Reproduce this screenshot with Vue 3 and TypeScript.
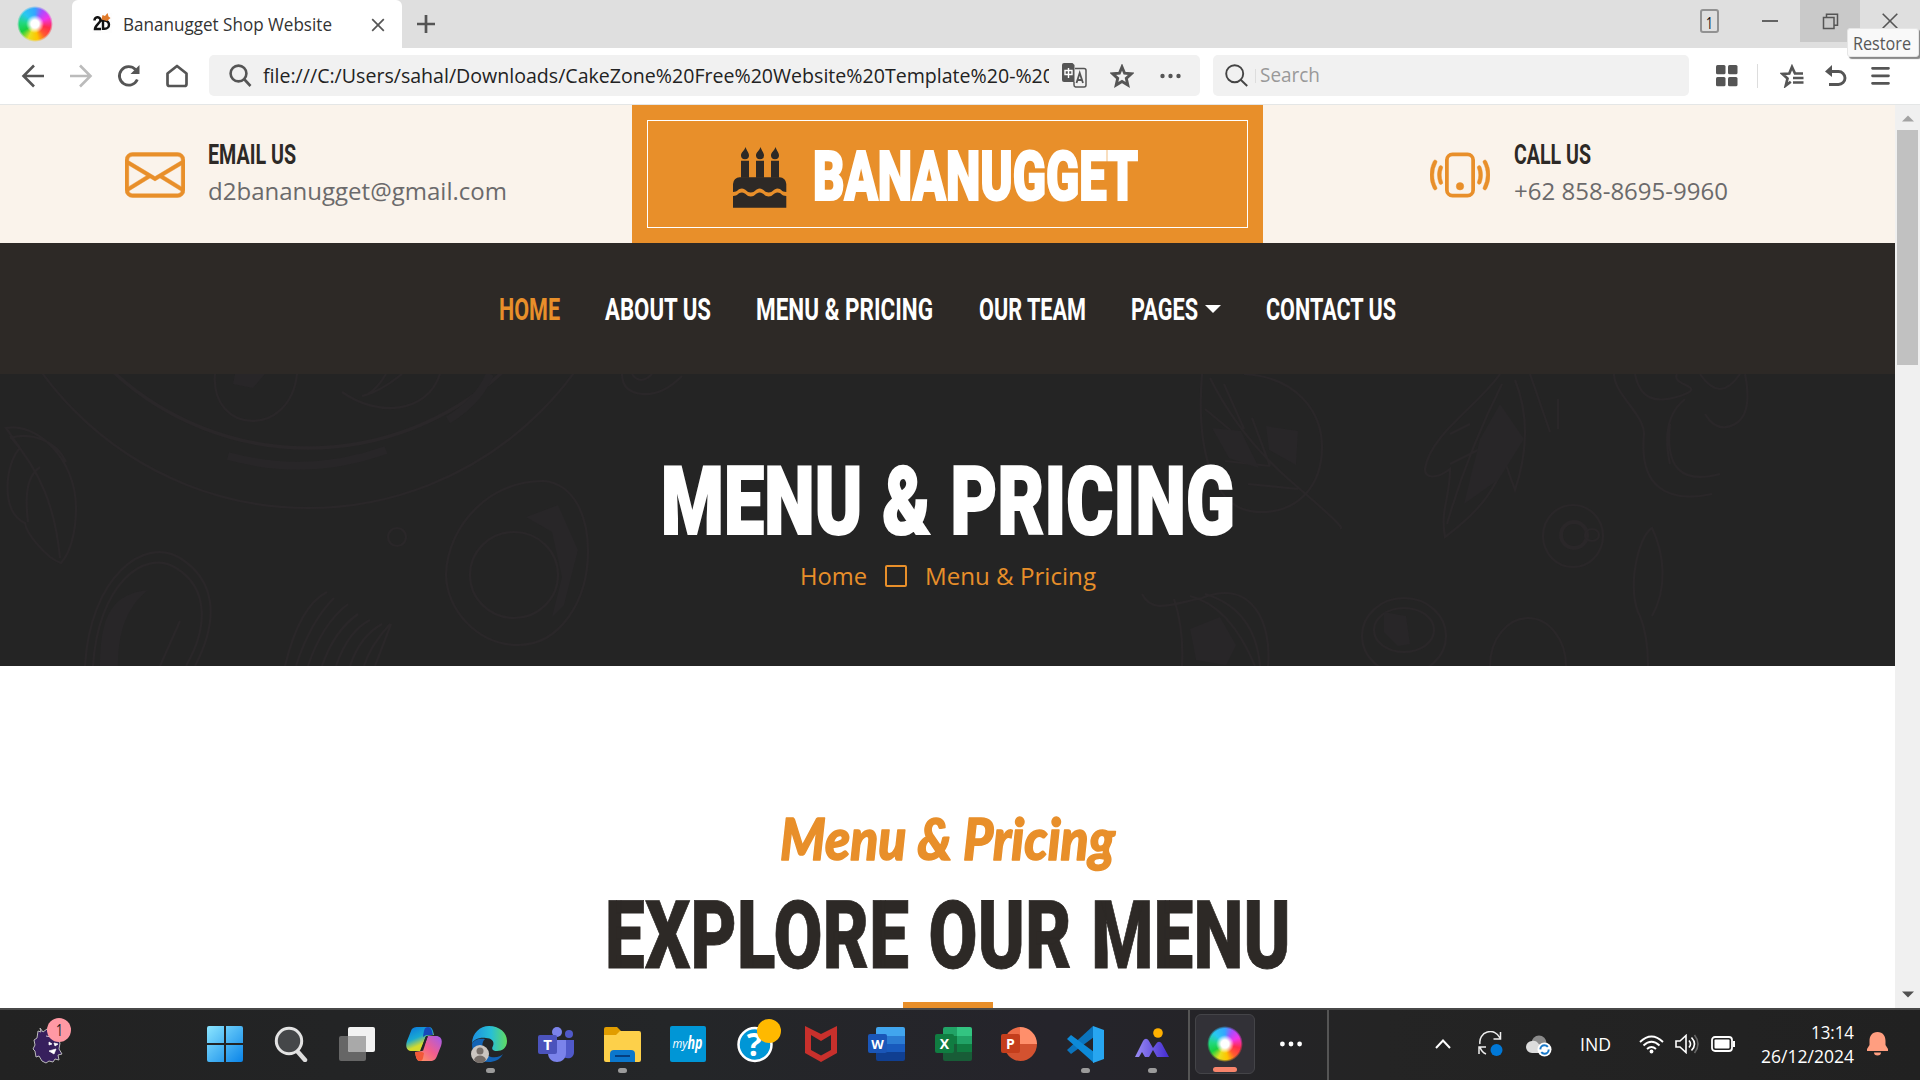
<script setup lang="ts">
import { h, type FunctionalComponent } from 'vue'

interface FitProps {
  t: string
  w: number
  cap: number
  x?: number
}

// Single-line label whose box is exactly its cap height tall and `w` pixels wide.
const Fit: FunctionalComponent<FitProps> = (props) =>
  h('svg', { width: props.w, height: props.cap, class: 'fit' }, [
    h(
      'text',
      {
        x: props.x ?? 0,
        y: props.cap,
        'font-size': props.cap / 0.713,
        textLength: props.w - 2 * (props.x ?? 0),
        lengthAdjust: 'spacingAndGlyphs',
      },
      props.t,
    ),
  ])
Fit.props = ['t', 'w', 'cap', 'x']

interface NavItem {
  label: string
  width: number
  active?: boolean
  caret?: boolean
}

const nav: NavItem[] = [
  { label: 'HOME', width: 61, active: true },
  { label: 'ABOUT US', width: 106 },
  { label: 'MENU & PRICING', width: 177 },
  { label: 'OUR TEAM', width: 107 },
  { label: 'PAGES', width: 67, caret: true },
  { label: 'CONTACT US', width: 130 },
]

const url = 'file:///C:/Users/sahal/Downloads/CakeZone%20Free%20Website%20Template%20-%20'
</script>

<template>
  <div class="screen">
    <div class="tabbar">
      <div class="logo-cell"><i class="swirl"></i></div>
      <div class="tab">
        <svg class="favicon" width="20" height="20" viewBox="0 0 20 20">
          <rect width="20" height="20" fill="#fdfdfd" />
          <path d="M2.500 7.500a3 3 0 0 1 6-.5c0 3-5.500 5-5.500 9h6" fill="none" stroke="#111" stroke-width="2.500" />
          <path d="M11 7.500v8.300h1.500c6 0 6-8.300 0-8.300H8.500" fill="none" stroke="#111" stroke-width="2.400" />
          <path d="M9.500 6.500l1-4.500 2.500 1L15.500 0l1 3.500 2 1.500L15 8z" fill="#e07a2a" />
        </svg>
        <Fit class="ui tab-title" t="Bananugget Shop Website" :w="209" :cap="12.5" :x="0" />
        <svg class="tab-close" width="14" height="14" viewBox="0 0 14 14"><path d="M1.200 1.200l11.600 11.600M12.800 1.200L1.200 12.800" stroke="#555" stroke-width="1.700" /></svg>
      </div>
      <svg class="plus" width="20" height="20" viewBox="0 0 20 20"><path d="M10 1v18M1 10h18" stroke="#555" stroke-width="2.700" /></svg>
      <div class="window-buttons">
        <div class="tab-count"><Fit class="ui" t="1" :w="7" :cap="12" /></div>
        <div class="wbtn"><svg width="16" height="16"><path d="M0 8h16" stroke="#555" stroke-width="1.800" /></svg></div>
        <div class="wbtn hovered">
          <svg width="17" height="17" viewBox="0 0 17 17" fill="none" stroke="#555" stroke-width="1.500"><path d="M1.500 4.500h10.500v11H1.500zM4.500 4V1.300h11v11H12.500" /></svg>
        </div>
        <div class="wbtn"><svg width="16" height="16" viewBox="0 0 16 16"><path d="M.7.7l14.600 14.600M15.300.7L.7 15.300" stroke="#555" stroke-width="1.600" /></svg></div>
      </div>
      <div class="tooltip"><Fit class="ui" t="Restore" :w="58" :cap="12.7" /></div>
    </div>

    <div class="toolbar">
      <svg class="tb-back" width="24" height="24" viewBox="0 0 24 24" fill="none" stroke="#555" stroke-width="2.600"><path d="M23 12H3M13 1.500L2.500 12 13 22.500" /></svg>
      <svg class="tb-fwd" width="24" height="24" viewBox="0 0 24 24" fill="none" stroke="#bbb" stroke-width="2.600"><path d="M1 12h20M11 1.500L21.500 12 11 22.500" /></svg>
      <svg class="tb-reload" width="24" height="24" viewBox="0 0 24 24"><path d="M20.300 15.500A9.300 9.300 0 1 1 18.500 5.500" fill="none" stroke="#555" stroke-width="2.800" /><path d="M22.500 1v9h-9z" fill="#555" /></svg>
      <svg class="tb-home" width="24" height="24" viewBox="0 0 24 24" fill="none" stroke="#555" stroke-width="2.700" stroke-linejoin="round"><path d="M2.500 9.500L12 2l9.500 7.500V20a2 2 0 0 1-2 2h-15a2 2 0 0 1-2-2z" /></svg>
      <div class="address">
        <svg class="mag" width="23" height="23" viewBox="0 0 23 23" fill="none" stroke="#555" stroke-width="2.600"><circle cx="9.500" cy="9.500" r="7.900" /><path d="M15 15l6.500 7" /></svg>
        <div class="url"><Fit class="ui" :t="url" :w="791" :cap="14.3" /></div>
        <svg class="translate" width="25" height="25" viewBox="0 0 25 25">
          <path d="M2 0h8.500l2 2v17H2a2 2 0 0 1-2-2V2a2 2 0 0 1 2-2z" fill="#555" />
          <path d="M13 5.500h9a2 2 0 0 1 2 2v14.500a2 2 0 0 1-2 2h-8.500a2 2 0 0 1-1.500-2v-3" fill="none" stroke="#555" stroke-width="1.500" />
          <path d="M3 7.500h7v4H3zM6.500 5v10" fill="none" stroke="#fff" stroke-width="1.400" />
          <path d="M14.500 20l3.200-10 3.300 10M15.700 17h4" fill="none" stroke="#555" stroke-width="1.800" />
        </svg>
        <svg class="star" width="24" height="24" viewBox="0 0 24 24"><path d="M12 3l2.600 6.200 6.700.6-5 4.500 1.500 6.700-5.800-3.500L6.200 21l1.500-6.700-5-4.500 6.700-.6z" fill="none" stroke="#555" stroke-width="2.900" /></svg>
        <svg class="more" width="21" height="6"><circle v-for="i in 3" :key="i" :cx="i * 8 - 5.500" cy="3" r="2.200" fill="#555" /></svg>
      </div>
      <div class="search">
        <svg class="mag" width="23" height="23" viewBox="0 0 23 23" fill="none" stroke="#444" stroke-width="1.900"><circle cx="9.700" cy="9.700" r="8.500" /><path d="M15.700 15.700l6.500 6.300" /></svg>
        <i class="caret-line"></i>
        <Fit class="ui placeholder" t="Search" :w="60" :cap="14.3" />
      </div>
      <svg class="grid" width="22" height="22" fill="#555"><rect width="9.500" height="9.300" rx="1.500" /><rect x="12" width="9.500" height="9.300" rx="1.500" /><rect y="12" width="9.500" height="9.300" rx="1.500" /><rect x="12" y="12" width="9.500" height="9.300" rx="1.500" /></svg>
      <i class="sep"></i>
      <svg class="fav" width="24" height="24" viewBox="0 0 24 24"><path d="M23 9.500h-8L12 3 9.300 9.500 2.500 10l5 4.500L5.800 21.500l5-3.800" fill="none" stroke="#555" stroke-width="2.700" /><path d="M13 14h10.500M13 18.500h10.500" stroke="#555" stroke-width="2.500" /></svg>
      <svg class="undo" width="22" height="22" viewBox="0 0 22 22"><path d="M4 6.500h9.500a6.500 6.500 0 0 1 0 13H4" fill="none" stroke="#555" stroke-width="2.900" /><path d="M0 6.500L7 0v12z" fill="#555" /></svg>
      <svg class="burger" width="19" height="20"><path d="M1.500 2.300h16M1.500 9.800h16M1.500 17.300h16" stroke="#555" stroke-width="2.700" stroke-linecap="round" /></svg>
    </div>

    <div class="viewport">
      <main class="page">
        <header class="top">
          <div class="contact email">
            <svg width="60" height="60" viewBox="0 0 16 16" fill="#e88f2a"><path d="M0 4a2 2 0 0 1 2-2h12a2 2 0 0 1 2 2v8a2 2 0 0 1-2 2H2a2 2 0 0 1-2-2V4Zm2-1a1 1 0 0 0-1 1v.217l7 4.200 7-4.200V4a1 1 0 0 0-1-1H2Zm13 2.383-4.708 2.825L15 11.105V5.383Zm-.034 6.876-5.640-3.471L8 9.583l-1.326-.795-5.640 3.470A1 1 0 0 0 2 13h12a1 1 0 0 0 .966-.741ZM1 11.105l4.708-2.897L1 5.383v5.722Z" stroke="#e88f2a" stroke-width=".12" /></svg>
            <div class="lines">
              <Fit class="osw medium" t="EMAIL US" :w="88" :cap="19.300" />
              <Fit class="sans" t="d2bananugget@gmail.com" :w="299" :cap="17.200" />
            </div>
          </div>
          <div class="brand">
            <div class="frame">
              <svg width="54" height="62" viewBox="0 0 54 62" fill="#2d2926">
                <path d="M12.500 0c-1 4-4.500 5-4.500 8.500a4 3.700 0 0 0 8 0c0-3-2-4-3.500-8.500zM27.500 0c-1 4-4.500 5-4.500 8.500a4 3.700 0 0 0 8 0c0-3-2-4-3.500-8.500zM42.500 0c-1 4-4.500 5-4.500 8.500a4 3.700 0 0 0 8 0c0-3-2-4-3.500-8.500z" />
                <path d="M8 13.700h8v17H8zM23 13.700h8v17h-8zM38 13.700h8v17h-8z" />
                <path d="M0 37a6.700 6.700 0 0 1 6.700-6.700h39.900A6.700 6.700 0 0 1 53.300 37v8c-5 0-5-3.500-8.800-3.500s-4.500 4-8.900 4-4.900-4-8.900-4-4.500 4-8.900 4-4.900-4-8.900-4S5 45 0 45z" />
                <path d="M0 49c5 0 5-3.500 8.900-3.500s4.500 4 8.900 4 4.900-4 8.900-4 4.500 4 8.900 4 4.900-4 8.900-4 3.800 3.500 8.800 3.500v11.800H0z" />
              </svg>
              <Fit class="osw black" t="BANANUGGET" :w="323" :cap="49" :x="-1" />
            </div>
          </div>
          <div class="contact call">
            <svg width="60" height="60" viewBox="0 0 16 16" fill="#e88f2a"><path d="M10 3a1 1 0 0 1 1 1v8a1 1 0 0 1-1 1H6a1 1 0 0 1-1-1V4a1 1 0 0 1 1-1h4zM6 2a2 2 0 0 0-2 2v8a2 2 0 0 0 2 2h4a2 2 0 0 0 2-2V4a2 2 0 0 0-2-2H6z" /><path d="M8 12a1 1 0 1 0 0-2 1 1 0 0 0 0 2zM1.599 4.058a.5.5 0 0 1 .208.676A6.967 6.967 0 0 0 1 8c0 1.180.292 2.292.807 3.266a.5.5 0 0 1-.884.468A7.968 7.968 0 0 1 0 8c0-1.347.334-2.619.923-3.734a.5.5 0 0 1 .676-.208zm12.802 0a.5.5 0 0 1 .676.208A7.967 7.967 0 0 1 16 8a7.967 7.967 0 0 1-.923 3.734.5.5 0 0 1-.884-.468A6.967 6.967 0 0 0 15 8c0-1.180-.292-2.292-.807-3.266a.5.5 0 0 1 .208-.676zM3.057 5.534a.5.5 0 0 1 .284.648A4.986 4.986 0 0 0 3 8c0 .642.120 1.255.340 1.818a.5.5 0 1 1-.930.364A5.986 5.986 0 0 1 2 8c0-.769.145-1.505.410-2.182a.5.5 0 0 1 .647-.284zm9.886 0a.5.5 0 0 1 .648.284C13.855 6.495 14 7.231 14 8c0 .769-.145 1.505-.410 2.182a.5.5 0 0 1-.930-.364C12.880 9.255 13 8.642 13 8c0-.642-.120-1.255-.340-1.818a.5.5 0 0 1 .283-.648z" stroke="#e88f2a" stroke-width=".12" /></svg>
            <div class="lines">
              <Fit class="osw medium" t="CALL US" :w="77" :cap="19.300" />
              <Fit class="sans" t="+62 858-8695-9960" :w="214" :cap="17.200" />
            </div>
          </div>
        </header>

        <nav class="nav">
          <a v-for="n in nav" :key="n.label" :class="{ active: n.active }">
            <Fit class="osw medium" :t="n.label" :w="n.width" :cap="21.700" />
            <svg v-if="n.caret" class="drop" width="16" height="8"><path d="M0 0h16L8 8z" fill="#fff" /></svg>
          </a>
        </nav>

        <section class="hero">
          <svg class="doodles" width="1895" height="292" fill="none" stroke="#2a2729" stroke-width="2.200">
            <circle cx="308" cy="-195" r="329" />
            <circle cx="308" cy="-213" r="287" stroke-width="3.500" />
            <path d="M228 82q80 22 158-6M490 0q-12 28-42 46" stroke="#282628" stroke-width="8" />
            <path d="M215 0c-5 60 75 65 82 0M342 18c35 25 85 22 98-18M362 22q18-4 40-22M386 0q-8 14-18 20" />
            <path d="M235 0h30l-12 14-20-4z" fill="#282628" stroke="none" />
            <path d="M6 54c30-6 70 30 70 80 0 25-6 45-15 55-15-5-35-30-36-40-25-10-20-60-5-75zM10 62c30 35 45 70 50 122M28 148c-5-40 5-50 12-55M66 88c-10-22-35-30-56-24" />
            <path d="M85 292c5-90 60-130 95-108s40 60 15 108M93 292c5-80 50-118 83-98s32 60 10 98M160 292l20-45" />
            <path d="M100 292c0-50 12-72 48-76-20 16-30 40-30 76z" fill="#282628" stroke="none" />
            <path d="M446 200c2-50 45-94 98-93 30 3 44 35 44 70 0 50-28 94-70 94-40 0-72-35-72-71z" />
            <ellipse cx="514" cy="201" rx="44" ry="43" /><ellipse cx="397" cy="163" rx="9" ry="9" />
            <path d="M526 143l32-12 20 45-14 55-12 12 10-40-10-45z" fill="#282628" stroke="none" />
            <path d="M285 292c6-25 18-62 42-74M296 292q14-44 38-68M308 292q14-42 40-62M322 292q12-35 36-52M336 292q12-35 34-46M350 292q10-30 32-42M364 292q6-20 26-42M375 292l16-42" />
            <path d="M622 0q0 18 20 20t40-18M632 0q8 12 20 0" />
            <path d="M1202 0c-6 75 10 140 60 138 35 0 60-25 60-65 0-35-25-70-78-73M1210 4q30 60 84 106t46 44M1235 60l-30-25M1270 92l-45-5M1270 92l-18-48M1298 115l-50-5M1244 55l-20-45" />
            <path d="M1212 54l29 3 18 37-30-10zM1266 52l32 5-2 34-27-15z" fill="#282628" stroke="none" />
            <path d="M1500 0c-20 30-70 60-75 95 0 10 12 10 25 0 0 30-10 40-5 68 40-30 50-50 60-75l10 28q20-60 0-110M1502 10q-35 70-55 140M1470 50l-20 10M1480 75l-30 15M1530 0l20 58M1558 25v30" />
            <path d="M1480 65l20-35 24 35-25 40-35 25z" fill="#282628" stroke="none" />
            <path d="M1614 0c0 20 30 40 30 60-5 50 20 70 68 60M1635 0c5 25 20 30 45 22 30-10-10-10-3-22M1670 50c-5 45 12 60 50 50M1685 25q-25 20-15 65M1700 0q20 30 40 0M1745 0q8 40-10 50t-30-10" />
            <ellipse cx="1573" cy="162" rx="30" ry="31" /><ellipse cx="1574" cy="161" rx="13" ry="13" stroke-width="4" /><ellipse cx="1592" cy="161" rx="7" ry="6" />
            <path d="M1648 292q0-30-8-50c-14-25-2-80 12-88 12 25 16 60 0 88" />
            <path d="M1142 220c10 20 30 10 60 4 50-20 70 25 66 68M1174 225q10 30 8 67M1205 220q50 15 55 72M1190 222q40 10 65 70" />
            <path d="M1190 255l30-12 16 28-10 20-30-5z" fill="#282628" stroke="none" />
            <ellipse cx="1404" cy="262" rx="42" ry="38" /><ellipse cx="1404" cy="256" rx="30" ry="22" />
            <path d="M1384 238l22 4 4 28-12 2-14-14z" fill="#282628" stroke="none" />
            <ellipse cx="1528" cy="292" rx="38" ry="48" />
          </svg>
          <Fit class="osw black spaced hero-title" t="MENU & PRICING" :w="570" :cap="68" :x="-2" />
          <div class="crumbs">
            <Fit class="sans" t="Home" :w="67" :cap="17" />
            <i class="square"></i>
            <Fit class="sans" t="Menu & Pricing" :w="171" :cap="17" />
          </div>
        </section>

        <section class="menu">
          <Fit class="script" t="Menu & Pricing" :w="335" :cap="41" />
          <Fit class="osw bold spaced explore" t="EXPLORE OUR MENU" :w="680" :cap="68" :x="-3" />
          <div class="rule"></div>
        </section>
      </main>
      <aside class="scroll">
        <svg width="12" height="7"><path d="M0 6.500h12L6 .5z" fill="#a3a3a3" /></svg>
        <i class="thumb"></i>
        <svg class="down" width="12" height="7"><path d="M0 .5h12L6 6.500z" fill="#505050" /></svg>
      </aside>
    </div>

    <footer class="taskbar">
      <div class="widget">
        <svg width="32" height="37" viewBox="0 0 32 37"><path d="M8 1l3 4 4-3 2 5 6 1 5 8-1 6 3 5-4 1 1 5-4-1-2 3-4-1-3 2-4-2-3-5-3 1-1-6-2-2 2-4-1-5 3-2 1-7 3 1z" fill="#37205d" stroke="#bbb" stroke-width="1" /><path d="M17 15l3 2-3 1zM22 16l4 1-3 2zM17 24l7-2-2 5zM14 9l5 1" fill="#fff" stroke="#fff" stroke-width=".7" /></svg>
        <span class="badge"><Fit class="ui" t="1" :w="7" :cap="12" /></span>
      </div>
      <div class="apps">
        <div class="app"><svg width="36" height="36" viewBox="0 0 36 36"><defs><linearGradient id="gw" x2="1" y2="1" gradientUnits="objectBoundingBox"><stop stop-color="#8ce6ff" /><stop offset="1" stop-color="#0a84e8" /></linearGradient></defs><path d="M2 0h15v17H0V2a2 2 0 0 1 2-2zM19 0h15a2 2 0 0 1 2 2v15H19zM0 19h17v17H2a2 2 0 0 1-2-2zM19 19h17v15a2 2 0 0 1-2 2H19z" fill="url(#gw)" /></svg></div>
        <div class="app"><svg width="36" height="36" viewBox="0 0 36 36"><path d="M25 26l7 8" stroke="#ddd" stroke-width="4.500" stroke-linecap="round" /><circle cx="16" cy="15" r="12.700" fill="#454749" stroke="#e3e3e3" stroke-width="3" /></svg></div>
        <div class="app"><svg width="36" height="36" viewBox="0 0 36 36"><rect y="10" width="27" height="25" rx="2" fill="#666" /><rect x="9" y="1" width="27" height="25" rx="2" fill="#f2f2f2" /><path d="M9 10h18v16H11a2 2 0 0 1-2-2z" fill="#a9a9a9" /></svg></div>
        <div class="app"><svg width="36" height="36" viewBox="0 0 36 36"><defs><linearGradient id="ga" x2=".5" y2="1"><stop stop-color="#0a73df" /><stop offset=".5" stop-color="#19a9d2" /><stop offset=".8" stop-color="#d4db2d" /></linearGradient><linearGradient id="gb" x1="1" x2="0" y2="1"><stop stop-color="#a05bf0" /><stop offset=".5" stop-color="#f25e8d" /><stop offset="1" stop-color="#ffa15d" /></linearGradient></defs><path d="M12 1h11c3 0 4 3 5 8l-8 1-6 15H6c-5 0-7-4-5-10l4-10c1-3 3-4 7-4z" fill="url(#ga)" /><path d="M22 1c3 0 4 3 5 8h-7l-3 2c1-6 1-10 5-10z" fill="#1648ba" /><path d="M24 35H14c-3 0-4-3-5-9l7-1 6-15h8c5 0 7 4 5 10l-4 10c-1 3-3 5-7 5z" fill="url(#gb)" /><path d="M14 35c-3 0-4-3-5-9h7l2 1c-1 5-1 8-4 8z" fill="#f25838" /><path d="M15 24l4.500-13h2L17 25z" fill="#242528" /></svg></div>
        <div class="app"><svg width="37" height="37" viewBox="0 0 37 37"><defs><linearGradient id="ge" x2="1"><stop stop-color="#1b8fe0" /><stop offset=".55" stop-color="#28bfd5" /><stop offset="1" stop-color="#61db61" /></linearGradient></defs><path d="M1 18C1 7 9 0 18 0c11 0 18 7 18 15 0 7-5 10-10 10-4 0-6-2-4-5 2-5-2-8-7-8C8 11 2 14 1 18z" fill="url(#ge)" /><path d="M1 18c2-5 8-6 13-5-5 4-3 16 6 18 6 1 10-1 12-3-3 6-9 8-14 8C8 36 1 29 1 18z" fill="#1263b5" /><circle cx="9" cy="28" r="9" fill="#cbc5c0" /><circle cx="9" cy="25" r="3.500" fill="#766e69" /><path d="M3 34c1-6 11-6 12 0-3 4-9 4-12 0z" fill="#766e69" /></svg><i class="dot"></i></div>
        <div class="app"><svg width="37" height="37" viewBox="0 0 37 37"><circle cx="19" cy="6" r="5" fill="#7b83eb" /><circle cx="31" cy="8" r="4" fill="#5059c9" /><path d="M23 14h13v12c0 8-10 8-13 2z" fill="#5059c9" /><path d="M10 14h18v13c0 12-18 12-18 0z" fill="#7b83eb" /><rect y="9" width="19" height="19" rx="2" fill="#4b53bc" /><text x="9.500" y="24" font-size="15" font-weight="700" fill="#fff" text-anchor="middle">T</text></svg></div>
        <div class="app"><svg width="37" height="36" viewBox="0 0 37 36"><path d="M2 1h11l4 4v6H0V3a2 2 0 0 1 2-2z" fill="#e19d00" /><path d="M0 9h12l4-4h19a2 2 0 0 1 2 2v27a2 2 0 0 1-2 2H2a2 2 0 0 1-2-2z" fill="#fdd04a" /><path d="M6 36V28a4 4 0 0 1 4-4h17a4 4 0 0 1 4 4v8z" fill="#0b77cc" /><path d="M11 30h15" stroke="#053f80" stroke-width="2" /></svg><i class="dot"></i></div>
        <div class="app"><svg width="36" height="36" viewBox="0 0 36 36"><rect width="36" height="36" rx="2" fill="#0096d6" /><text x="2.500" y="22" font-size="13" font-style="italic" fill="#fff" textLength="15" lengthAdjust="spacingAndGlyphs">my</text><text x="17.500" y="23" font-size="18" font-style="italic" font-weight="700" fill="#fff" textLength="15" lengthAdjust="spacingAndGlyphs">hp</text></svg></div>
        <div class="app"><svg class="over" width="36" height="36" viewBox="0 0 36 36"><circle cx="18" cy="18.500" r="16.500" fill="#0096d6" stroke="#fff" stroke-width="2.500" /><text x="17.500" y="30" font-size="32" font-weight="700" fill="#fff" text-anchor="middle">?</text><circle cx="32" cy="5" r="12" fill="#ffb900" /></svg></div>
        <div class="app"><svg width="34" height="36" viewBox="0 0 34 36"><path d="M1 0l16 8 16-8v27l-16 9L1 27zM7 9v15l10 5.500L27 24V9l-10 6z" fill="#c8302c" fill-rule="evenodd" /></svg></div>
        <div class="app"><svg width="37" height="34" viewBox="0 0 37 34"><path d="M10 0h25a2 2 0 0 1 2 2v7H8V2a2 2 0 0 1 2-2z" fill="#41a5ee" /><path d="M8 9h29v8H8z" fill="#2b7cd3" /><path d="M8 17h29v8H8z" fill="#185abd" /><path d="M8 25h29v7a2 2 0 0 1-2 2H10a2 2 0 0 1-2-2z" fill="#103f91" /><rect y="7" width="19" height="19" rx="2" fill="#1a56b8" /><text x="9.500" y="21.500" font-size="13" font-weight="700" fill="#fff" text-anchor="middle">W</text></svg></div>
        <div class="app"><svg width="37" height="34" viewBox="0 0 37 34"><path d="M10 0h12v9H8V2a2 2 0 0 1 2-2z" fill="#21a366" /><path d="M22 0h13a2 2 0 0 1 2 2v7H22z" fill="#33c481" /><path d="M8 9h14v8H8z" fill="#107c41" /><path d="M22 9h15v8H22z" fill="#21a366" /><path d="M8 17h14v8H8z" fill="#185c37" /><path d="M22 17h15v8H22z" fill="#107c41" /><path d="M8 25h29v7a2 2 0 0 1-2 2H10a2 2 0 0 1-2-2z" fill="#185c37" /><rect y="7" width="19" height="19" rx="2" fill="#107c41" /><text x="9.500" y="22" font-size="14" font-weight="700" fill="#fff" text-anchor="middle">X</text></svg></div>
        <div class="app"><svg width="36" height="34" viewBox="0 0 36 34"><path d="M19 0v17H3A17 17 0 0 1 19 0z" fill="#ed6c47" /><path d="M19 0a17 17 0 0 1 17 17H19z" fill="#ff8f6b" /><path d="M3 17h33a16.500 17 0 0 1-33 0z" fill="#d35230" /><rect y="7" width="19" height="19" rx="2" fill="#c43e1c" /><text x="9.500" y="22" font-size="14" font-weight="700" fill="#fff" text-anchor="middle">P</text></svg></div>
        <div class="app"><svg width="37" height="37" viewBox="0 0 37 37"><path d="M26 0L0 24l4 4 23-17z" fill="#0b74bd" /><path d="M0 13l4-4 23 17v11z" fill="#0d8ad8" /><path d="M26 0l11 4v29l-11 4z" fill="#27a6f1" /></svg><i class="dot"></i></div>
        <div class="app"><svg width="36" height="36" viewBox="0 0 36 36"><defs><linearGradient id="gm" x2="1"><stop stop-color="#9a8cf5" /><stop offset="1" stop-color="#432bd0" /></linearGradient></defs><circle cx="24" cy="7" r="4.800" fill="#ffb000" /><path d="M1 31l8-16c2-3 4-3 6 0l4 7 3-4c2-3 4-3 6 0l7 13H23l-4-7-4 7h-4l-3-5-3 5z" fill="url(#gm)" /></svg><i class="dot"></i></div>
      </div>
      <div class="current"><div class="tile"><i class="swirl"></i><i class="bar"></i></div><svg width="24" height="6"><circle v-for="i in 3" :key="i" :cx="i * 8.600 - 5.200" cy="3" r="2.400" fill="#fff" /></svg></div>
      <div class="tray">
        <svg class="chev" width="16" height="10" viewBox="0 0 16 10"><path d="M1 9l7-7.500L15 9" fill="none" stroke="#fff" stroke-width="2" /></svg>
        <svg class="sync" width="26" height="26" viewBox="0 0 26 26" fill="none" stroke="#eee" stroke-width="1.500"><path d="M2 13A10.500 10.500 0 0 1 22 7M22.500 1v7h-7M8 23a11 11 0 0 1-6-7M1 23v-7h7" /><circle cx="18.500" cy="19" r="6" fill="#0078d7" stroke="none" /></svg>
        <svg class="cloud" width="26" height="22" viewBox="0 0 26 22"><circle cx="13" cy="8" r="7.500" fill="#8b8b8b" /><path d="M6 18a6 6 0 0 1 0-12c5-1 6 3 8 4v8z" fill="#dcdcdc" /><circle cx="18.500" cy="14.500" r="7" fill="#fff" /><circle cx="18.500" cy="14.500" r="4.200" fill="none" stroke="#1878c8" stroke-width="2" stroke-dasharray="10 3" /></svg>
        <Fit class="ui ind" t="IND" :w="31" :cap="13" />
        <svg class="wifi" width="25" height="19" viewBox="0 0 25 19" fill="none" stroke="#fff" stroke-width="1.900"><path d="M1 7Q12.500-4 24 7M4.500 10.500q8-7.500 16 0M8 14q4.500-4 9 0" /><circle cx="12.500" cy="16.500" r="1.900" fill="#fff" stroke="none" /></svg>
        <svg class="speaker" width="25" height="20" viewBox="0 0 25 20" fill="none" stroke="#fff" stroke-width="1.600"><path d="M1 7h4l6-5.500v17L5 13H1zM14 6.500q3 3.500 0 7M16.500 3.500q6 6.500 0 13" /><path d="M19.500 1q7 9 0 18" stroke="#666" /></svg>
        <svg class="battery" width="26" height="17" viewBox="0 0 26 17"><rect x="1" y="1" width="20" height="14" rx="3" fill="none" stroke="#fff" stroke-width="1.800" /><rect x="3.500" y="3.500" width="15" height="9" rx="1" fill="#fff" /><path d="M22 5h2v6h-2" fill="#fff" /></svg>
        <div class="clock"><Fit class="ui" t="13:14" :w="43" :cap="12.800" /><Fit class="ui" t="26/12/2024" :w="93" :cap="12.800" /></div>
        <svg class="bell" width="21" height="24" viewBox="0 0 21 24" fill="#ff9e80"><path d="M10.500 0C5 0 2.500 4 2.500 9v4L0 17v2h21v-2l-2.500-4V9c0-5-2.500-9-8-9zM7 20.500h7a3.500 3 0 0 1-7 0z" /></svg>
      </div>
    </footer>
  </div>
</template>

<style>
body { overflow: hidden; }
</style>

<style scoped>
.screen { width: 1920px; height: 1080px; display: flex; flex-direction: column; background: #fff; font-family: "Open Sans", "Noto Sans", sans-serif; overflow: hidden; }
svg { display: block; flex: none; }
.fit { overflow: visible; fill: currentColor; }
.ui { font-family: "Open Sans", sans-serif; }
.sans { font-family: "Open Sans", sans-serif; }
.osw { font-family: Roboto, "Liberation Sans Narrow", sans-serif; }
.medium { font-weight: 700; }
.bold { font-weight: 900; stroke: currentColor; stroke-width: .8px; }
.black { font-weight: 900; stroke: currentColor; stroke-width: 2.200px; }
.spaced { word-spacing: .13em; letter-spacing: .02em; }
.script { font-family: Lato, sans-serif; font-style: italic; font-weight: 900; color: #e88f2a; stroke: currentColor; stroke-width: 1.500px; stroke-linejoin: round; }

.tabbar { height: 48px; flex: none; display: flex; background: #dfdfdf; position: relative; }
.logo-cell { width: 72px; display: flex; justify-content: center; padding: 6px 2px 0 0; box-sizing: border-box; }
.swirl { display: block; width: 36px; height: 36px; border-radius: 50%; background: radial-gradient(circle, #fff 4px, transparent 9px), conic-gradient(#35a5ff, #a84dff 30deg, #f235e8 65deg, #ff2a4a 105deg, #ff5a30 140deg, #ffc400 170deg, #e8e020 205deg, #18cf40 240deg, #20d880 275deg, #28c8f0 315deg, #35a5ff); -webkit-mask: radial-gradient(circle, #000 15.500px, transparent 18px); mask: radial-gradient(circle, #000 15.500px, transparent 18px); }
.tab { width: 330px; background: #fff; border-radius: 6px 6px 0 0; display: flex; align-items: flex-start; box-sizing: border-box; padding-left: 20px; }
.favicon { margin-top: 13px; }
.tab-title { margin: 17.500px 0 0 11px; color: #333; }
.tab-close { margin: 18px 0 0 39px; }
.plus { margin: 14px 0 0 14px; }
.window-buttons { margin-left: auto; display: flex; }
.tab-count { width: 19px; height: 24px; margin: 9px 21px 0 0; box-sizing: border-box; border: 2px solid #929292; border-radius: 3px; display: flex; justify-content: center; align-items: flex-end; padding-bottom: 2px; color: #111; }
.wbtn { width: 60px; height: 42px; display: flex; align-items: center; justify-content: center; }
.hovered { background: #c9c9c9; }
.tooltip { position: absolute; z-index: 2; left: 1847px; top: 28px; width: 72px; height: 29px; box-sizing: border-box; background: #f9f9f9; border: 1px solid #e6e6e6; border-radius: 3px; box-shadow: 2px 2px 1px #888; padding: 8px 0 0 5px; color: #575757; }

.toolbar { height: 57px; flex: none; box-sizing: border-box; border-bottom: 1px solid #e4e6e6; display: flex; align-items: center; padding: 0 0 1px 21px; }
.tb-fwd { margin-left: 24px; }
.tb-reload { margin-left: 24px; }
.tb-home { margin-left: 24px; }
.address { margin-left: 20px; width: 991px; height: 41px; border-radius: 5px; background: #f1f1f1; display: flex; align-items: center; box-sizing: border-box; padding-left: 20px; }
.url { width: 786px; margin-left: 11px; padding: 14px 0 13px; overflow: hidden; color: #222; }
.translate { margin-left: 13px; }
.star { margin-left: 23px; }
.more { margin-left: 26px; }
.search { margin-left: 13px; width: 476px; height: 41px; border-radius: 5px; background: #f1f1f1; display: flex; align-items: center; box-sizing: border-box; padding-left: 12px; }
.caret-line { width: 1px; height: 14px; background: #ddd; margin: 0 4px 0 7px; }
.placeholder { color: #999; }
.grid { margin-left: 27px; }
.sep { width: 1px; height: 24px; background: #ddd; margin: 0 22px 0 19px; }
.undo { margin-left: 21px; }
.burger { margin-left: 24px; }

.viewport { height: 903px; flex: none; display: flex; overflow: hidden; }
.page { width: 1895px; flex: none; }
.top { height: 138px; background: #faf3eb; display: flex; }
.contact { width: 632px; flex: none; display: flex; align-items: flex-start; box-sizing: border-box; padding-top: 40px; }
.email { padding-left: 124.500px; }
.call { padding-left: 167px; }
.lines { margin-left: 23.500px; display: flex; flex-direction: column; gap: 18.500px; color: #6b6a6b; }
.lines .osw { color: #2d2926; }
.brand { width: 631px; flex: none; box-sizing: border-box; padding: 15px; background: #e88f2a; }
.frame { height: 108px; box-sizing: border-box; border: 1px solid #fff; display: flex; align-items: flex-start; padding-left: 85px; color: #fff; }
.frame > svg:first-child { margin-top: 26px; }
.frame > .fit { margin: 30px 0 0 27px; }
.nav { height: 131px; background: #2d2926; display: flex; justify-content: center; gap: 45.300px; color: #fff; }
.nav a { display: flex; padding-top: 54.500px; }
.nav .active { color: #e88f2a; }
.drop { margin: 7.500px 0 0 7px; }
.hero { height: 292px; background: #242424; position: relative; display: flex; flex-direction: column; align-items: center; box-sizing: border-box; padding-top: 91.500px; color: #fff; }
.doodles { position: absolute; left: 0; top: 0; }
.hero-title, .crumbs { position: relative; }
.crumbs { margin-top: 31.500px; display: flex; align-items: flex-start; color: #e88f2a; }
.square { width: 22px; height: 22px; margin: 0 18px 0 18px; box-sizing: border-box; border: 2.500px solid #e88f2a; border-radius: 2px; }
.crumbs .fit { margin-top: 3px; }
.menu { height: 342px; background: #fff; display: flex; flex-direction: column; align-items: center; box-sizing: border-box; padding-top: 153px; }
.explore { margin-top: 39.500px; color: #2d2926; }
.rule { width: 90px; height: 6px; margin-top: 34.500px; background: #e88f2a; }
.scroll { width: 25px; background: #f0f0f0; display: flex; flex-direction: column; align-items: center; box-sizing: border-box; padding: 10px 0; }
.thumb { width: 21px; height: 235px; margin-top: 8px; background: #c1c1c1; }
.down { margin-top: auto; }

.taskbar { height: 72px; flex: none; box-sizing: border-box; border-top: 2px solid #484848; background: linear-gradient(90deg, #222 0, #242628 35%, #25242b 55%, #242424 72%, #212121); display: flex; color: #fff; }
.widget { width: 192px; box-sizing: border-box; padding: 17px 0 0 32px; position: relative; }
.badge { position: absolute; left: 47px; top: 8px; width: 24px; height: 24px; border-radius: 50%; background: #ff99a4; color: #222; display: flex; align-items: center; justify-content: center; }
.apps { display: flex; width: 996px; flex: none; }
.app { width: 66.200px; flex: none; display: flex; align-items: center; justify-content: center; position: relative; padding-bottom: 2px; box-sizing: border-box; height: 70px; }
.over { overflow: visible; }
.dot { position: absolute; left: 29px; top: 58px; width: 9px; height: 5px; border-radius: 3px; background: #9b9b9b; }
.current { width: 141px; flex: none; box-sizing: border-box; border: solid #555; border-width: 0 2px; display: flex; align-items: center; padding: 0 0 2px 5px; gap: 24px; }
.tile { width: 60px; height: 60px; box-sizing: border-box; border: 1px solid #444448; border-radius: 6px; background: #323137; display: flex; flex-direction: column; align-items: center; padding-top: 11px; }
.bar { width: 24px; height: 5px; border-radius: 3px; background: #f7846b; margin-top: 5px; }
.tray { display: flex; align-items: center; margin-left: 106px; padding-bottom: 2px; }
.sync { margin-left: 27px; }
.cloud { margin: 4px 0 0 22px; }
.ind { margin-left: 28px; }
.wifi { margin-left: 28px; }
.speaker { margin-left: 11px; }
.battery { margin-left: 11px; }
.clock { margin-left: 24px; display: flex; flex-direction: column; align-items: flex-end; gap: 11px; }
.bell { margin-left: 13px; }
</style>
